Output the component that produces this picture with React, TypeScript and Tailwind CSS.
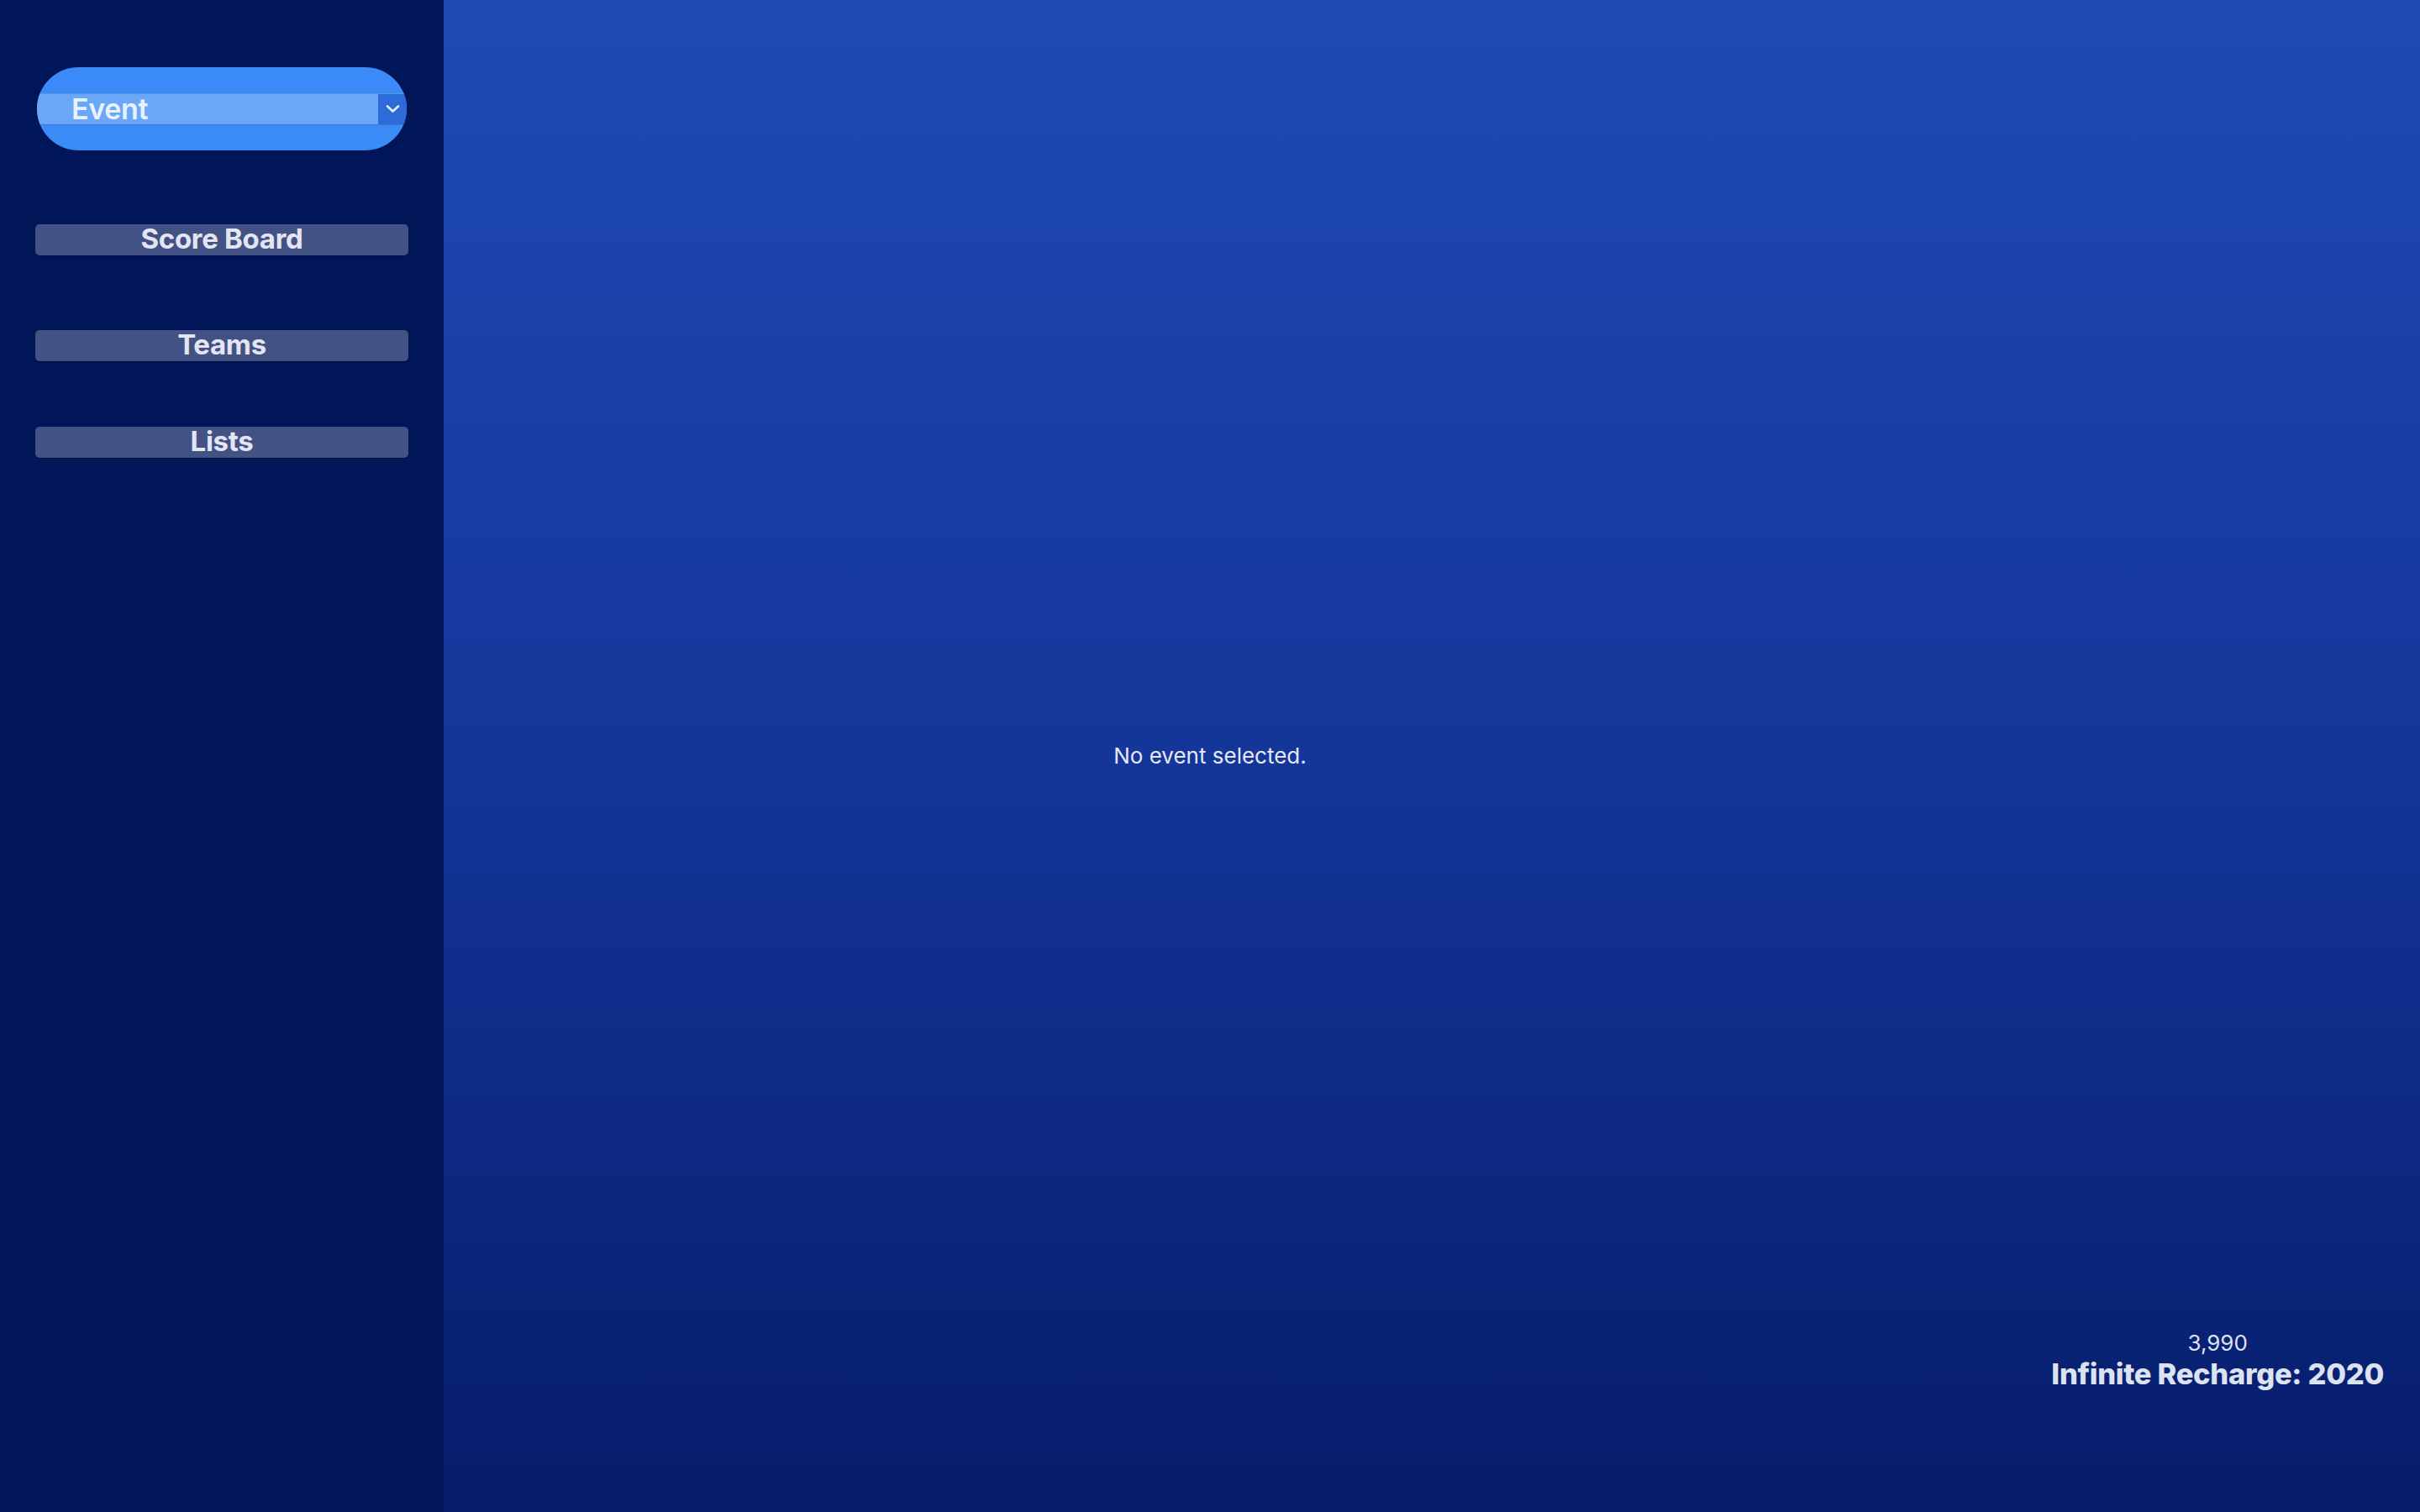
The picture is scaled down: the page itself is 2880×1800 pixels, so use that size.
import React, { useState } from "react";

const navItems = ["Score Board", "Teams", "Lists"];

const NavButton = ({ text, extraStyle }: { text: string; extraStyle?: string }) => (
  <button
    className={`w-full h-[37px] rounded-[5px] bg-[#435284] text-[#e3e6f2] text-[33px] font-bold leading-[30px] pb-[3px] tracking-[-0.3px] shadow-[0_1px_1px_rgba(0,0,0,0.25)] ${extraStyle ?? ""}`}
  >
    {text}
  </button>
);

const App = () => {
  const [event, setEvent] = useState("");

  return (
    <div className="w-full h-screen flex font-['Inter','Liberation_Sans',sans-serif] overflow-hidden">
      <aside className="w-[528px] shrink-0 bg-[#001659] px-[42px] pt-[80px]">
        <div className="mx-[2px] h-[99px] rounded-full bg-[#3a8bf7] flex items-center overflow-hidden">
          <div className="w-full h-[38px] flex border-t border-[#5a95e6] border-b-[#3c7ad6] border-b">
            <div className="flex-1 bg-[#6aa8f7] flex items-center pl-[41px] text-[#e9f1fd] text-[34px] font-semibold leading-none tracking-[-0.3px]">
              {event || "Event"}
            </div>
            <div
              className="w-[34px] bg-[#2d6bd8] flex items-center justify-center"
              onClick={() => setEvent("")}
            >
              <svg width="17" height="11" viewBox="0 0 17 11" fill="none">
                <path
                  d="M2 2.5 L8.5 8.5 L15 2.5"
                  stroke="#e8eefc"
                  strokeWidth="2.6"
                  strokeLinecap="round"
                  strokeLinejoin="round"
                />
              </svg>
            </div>
          </div>
        </div>

        <NavButton text={navItems[0]} extraStyle="mt-[88px]" />
        <NavButton text={navItems[1]} extraStyle="mt-[89px]" />
        <NavButton text={navItems[2]} extraStyle="mt-[78px]" />
      </aside>

      <main className="flex-1 flex flex-col bg-gradient-to-b from-[#1f4ab4] via-[#14369a] to-[#071c6a]">
        <div className="flex-1 flex items-center justify-center pt-[216px] pr-[528px]">
          <p className="text-[#e6e9f5] text-[26px] leading-none">No event selected.</p>
        </div>
        <div className="self-end mr-[43px] pb-[142px] flex flex-col items-center text-[#dde2f1]">
          <span className="text-[26px] leading-[30px]">3,990</span>
          <span className="text-[34.5px] font-extrabold leading-[44px] tracking-[-0.3px]">
            Infinite Recharge: 2020
          </span>
        </div>
      </main>
    </div>
  );
};

export default App;
